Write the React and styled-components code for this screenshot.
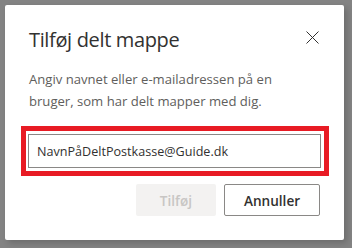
import React from 'react';
import styled, { createGlobalStyle } from 'styled-components';

const GlobalStyle = createGlobalStyle`
    html, body {
        margin: 0;
        padding: 0;
        width: 352px;
        height: 248px;
        overflow: hidden;
        background: #838383;
        font-family: 'Open Sans', 'Noto Sans', sans-serif;
    }
`

const Backdrop = styled.div`
    width: 352px;
    height: 248px;
    padding: 5px 8px 8px 5px;
    box-sizing: border-box;
`

const Dialog = styled.div`
    width: 339px;
    height: 235px;
    box-sizing: border-box;
    background: #ffffff;
    border-radius: 2px;
    box-shadow: 3px 3px 6px rgba(0, 0, 0, 0.18);
    display: flex;
    flex-direction: column;
`

const Header = styled.div`
    display: flex;
    justify-content: space-between;
    align-items: center;
    padding: 20px 24px 0 24px;
    height: 34px;
`

const Title = styled.h1`
    margin: 0;
    font-size: 20px;
    font-weight: 400;
    color: #323130;
    letter-spacing: -0.35px;
`

const CloseButton = styled.button`
    width: 24px;
    height: 24px;
    margin: -4px -4px 0 0;
    padding: 0;
    border: none;
    background: none;
    display: flex;
    align-items: center;
    justify-content: center;
    cursor: pointer;
`

const Body = styled.div`
    padding: 14px 24px 24px 24px;
    display: flex;
    flex-direction: column;
`

const Description = styled.p`
    margin: 0;
    max-width: 258px;
    font-size: 13.1px;
    line-height: 22px;
    color: #605e5c;
`

const Highlight = styled.div`
    margin: 14px -9px 0 -8px;
    border: 5px solid #e81b24;
    padding: 3px 3px 3px 2px;
`

const Input = styled.input`
    display: block;
    width: 100%;
    height: 34px;
    box-sizing: border-box;
    border: 1px solid #8a8886;
    padding: 0 8px;
    font-family: 'Open Sans', 'Noto Sans', sans-serif;
    font-size: 12.6px;
    color: #323130;
    outline: none;
`

const Actions = styled.div`
    display: flex;
    justify-content: flex-end;
    gap: 8px;
    margin-top: 8px;
`

const Button = styled.button`
    height: 32px;
    width: ${p => p.$width}px;
    box-sizing: border-box;
    border-radius: 2px;
    font-family: 'Open Sans', 'Noto Sans', sans-serif;
    font-size: 13.6px;
    font-weight: 600;
    border: ${p => p.disabled ? 'none' : '1px solid #8a8886'};
    background: ${p => p.disabled ? '#f3f2f1' : '#ffffff'};
    color: ${p => p.disabled ? '#c8c6c4' : '#323130'};
    cursor: ${p => p.disabled ? 'default' : 'pointer'};
`

const App = () => {
    return (
        <>
            <GlobalStyle />
            <Backdrop>
                <Dialog>
                    <Header>
                        <Title>Tilføj delt mappe</Title>
                        <CloseButton aria-label="Luk">
                            <svg width="13" height="13" viewBox="0 0 13 13">
                                <path d="M0.5 0.5 L12.5 12.5 M12.5 0.5 L0.5 12.5" stroke="#323130" strokeWidth="1" />
                            </svg>
                        </CloseButton>
                    </Header>
                    <Body>
                        <Description>
                            Angiv navnet eller e-mailadressen på en bruger, som har delt mapper med dig.
                        </Description>
                        <Highlight>
                            <Input defaultValue="NavnPåDeltPostkasse@Guide.dk" />
                        </Highlight>
                        <Actions>
                            <Button $width={80} disabled>Tilføj</Button>
                            <Button $width={96}>Annuller</Button>
                        </Actions>
                    </Body>
                </Dialog>
            </Backdrop>
        </>
    );
};

export default App;
